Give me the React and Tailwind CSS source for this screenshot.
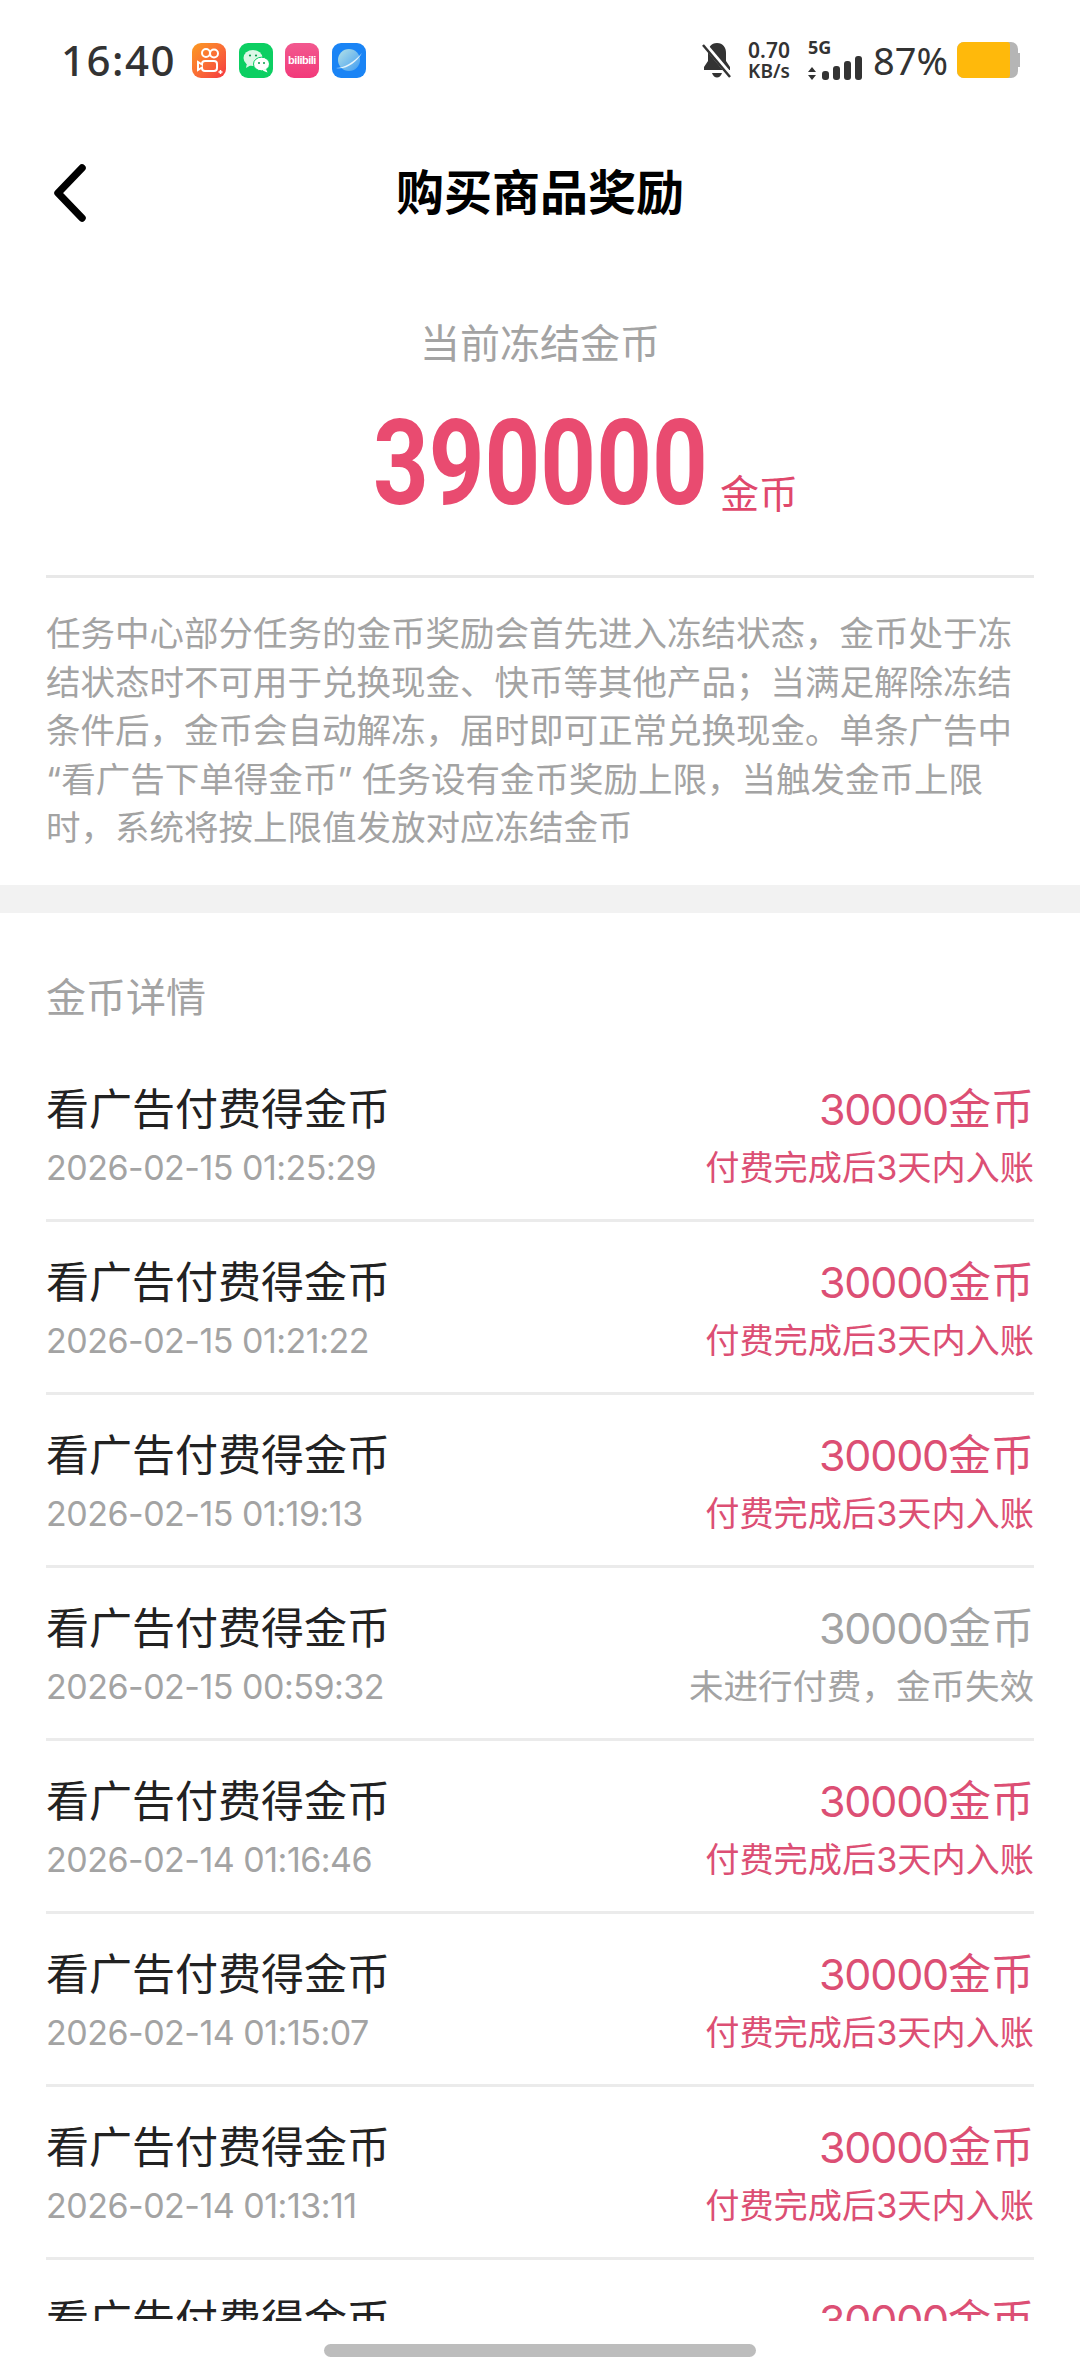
import React from 'react'

const rows = [
  { time: '2026-02-15 01:25:29' },
  { time: '2026-02-15 01:21:22' },
  { time: '2026-02-15 01:19:13' },
  { time: '2026-02-15 00:59:32', failed: true },
  { time: '2026-02-14 01:16:46' },
  { time: '2026-02-14 01:15:07' },
  { time: '2026-02-14 01:13:11' },
  { time: '2026-02-14 01:11:02' },
]

const KuaishouIcon = () => (
  <div className="w-[34px] h-[35px] rounded-[9px] bg-gradient-to-br from-[#fb9a1e] to-[#f5323f]">
    <svg viewBox="0 0 34 35" className="w-full h-full" fill="none" stroke="#fff" strokeWidth="2">
      <circle cx="14" cy="10" r="4" />
      <circle cx="22" cy="10.500" r="4" />
      <path d="M13 18h9a3 3 0 0 1 3 3v4a3 3 0 0 1-3 3h-9a3 3 0 0 1-3-3v-0.500L6 27v-8l4 2.500V21a3 3 0 0 1 3-3z" />
      <path d="M28.500 27v4M26.500 29h4" strokeWidth="1.500" />
    </svg>
  </div>
)

const WechatIcon = () => (
  <div className="w-[34px] h-[35px] rounded-[9px] bg-[#0ccf62]">
    <svg viewBox="0 0 34 35" className="w-full h-full">
      <ellipse cx="14" cy="15" rx="9.500" ry="8" fill="#dcf7e6" />
      <path d="M8 20l-1 5 5-3z" fill="#dcf7e6" />
      <ellipse cx="22.500" cy="21" rx="8" ry="6.800" fill="#fff" stroke="#0ccf62" strokeWidth="1" />
      <path d="M27 26l1.500 3.500-5-2z" fill="#fff" />
      <circle cx="11" cy="12.500" r="1.100" fill="#0a9c4b" />
      <circle cx="17" cy="12.500" r="1.100" fill="#0a9c4b" />
      <circle cx="20" cy="20" r="1" fill="#0a9c4b" />
      <circle cx="25" cy="20" r="1" fill="#0a9c4b" />
    </svg>
  </div>
)

const BiliIcon = () => (
  <div className="w-[34px] h-[35px] rounded-[9px] bg-gradient-to-b from-[#f2588f] to-[#f2397a] flex items-center justify-center overflow-hidden">
    <span className="text-[11px] font-bold text-white tracking-[-0.500px] font-['Liberation_Sans',sans-serif]">bilibili</span>
  </div>
)

const BrowserIcon = () => (
  <div className="w-[34px] h-[35px] rounded-[9px] bg-[#1a84f5]">
    <svg viewBox="0 0 34 35" className="w-full h-full" fill="none">
      <defs>
        <linearGradient id="planet" x1="0" y1="0" x2="1" y2="1">
          <stop offset="0" stopColor="#b5e2e6" />
          <stop offset="1" stopColor="#3f9cf2" />
        </linearGradient>
      </defs>
      <circle cx="17" cy="17" r="11" fill="url(#planet)" />
      <path d="M4 25c8 0 18-6 26-15-6 10-16 17-26 15z" fill="#e6f5fb" />
    </svg>
  </div>
)

const BellOffIcon = () => (
  <svg viewBox="0 0 30 36" className="w-[30px] h-[36px]">
    <path d="M15 1c-6 0-9 4.500-9 10v8l-4 6v3h26v-3l-4-6v-8c0-5.500-3-10-9-10z" fill="#333" />
    <path d="M10 31c1 3 3 4.500 5 4.500s4-1.500 5-4.500z" fill="#333" />
    <path d="M3 3l26 31" stroke="#fff" strokeWidth="5" />
    <path d="M1 3l27 32" stroke="#333" strokeWidth="2.500" />
  </svg>
)

const SignalIcon = () => (
  <div className="flex items-end gap-[4px]">
    <svg viewBox="0 0 8 13" className="w-[8px] h-[13px] mr-[2px]" fill="#333">
      <path d="M4 0l4 5H0zM4 13L0 8h8z" />
    </svg>
    <div className="w-[7px] h-[9px] rounded-[3px] bg-[#333]" />
    <div className="w-[7px] h-[14px] rounded-[3px] bg-[#333]" />
    <div className="w-[7px] h-[19px] rounded-[3px] bg-[#333]" />
    <div className="w-[7px] h-[24px] rounded-[3px] bg-[#333]" />
  </div>
)

const StatusBar = () => (
  <div className="h-[120px] flex items-center pl-[61px] pr-[60px] font-['Noto_Sans',sans-serif] text-[#333]">
    <span className="w-[131px] text-[42px] font-medium leading-none tracking-[1.500px]">16:40</span>
    <div className="flex gap-[12.500px]">
      <KuaishouIcon />
      <WechatIcon />
      <BiliIcon />
      <BrowserIcon />
    </div>
    <div className="ml-auto flex items-center">
      <BellOffIcon />
      <div className="ml-[13px] w-[48px] flex flex-col items-center font-semibold">
        <span className="text-[21px] leading-[21px]">0.70</span>
        <span className="text-[19px] leading-[20px]">KB/s</span>
      </div>
      <div className="ml-[15px] flex flex-col">
        <span className="text-[18px] leading-[15px] font-bold mb-[1px]">5G</span>
        <SignalIcon />
      </div>
      <span className="ml-[11px] w-[74px] text-[38px] leading-none">87%</span>
      <div className="ml-[10px] flex items-center">
        <div className="w-[61px] h-[36px] rounded-[7px] bg-[#b5b5b5] overflow-hidden">
          <div className="w-[53px] h-full rounded-r-[3px] bg-[#ffb90b]" />
        </div>
        <div className="w-[2px] h-[14px] bg-[#b5b5b5]" />
      </div>
    </div>
  </div>
)

const Header = () => (
  <div className="relative h-[148px] pb-[3px] flex items-center justify-center">
    <svg viewBox="0 0 32 58" className="absolute left-[54px] top-[44px] w-[32px] h-[58px]" fill="none" stroke="#000" strokeWidth="7.500" strokeLinecap="round" strokeLinejoin="round">
      <path d="M28 4L4 29l24 25" />
    </svg>
    <h1 className="text-[48px] font-bold leading-none text-black">购买商品奖励</h1>
  </div>
)

const Row = ({ time, failed }) => (
  <div className="h-[173px] mx-[46px] pt-[30px] border-b-[3px] border-[#ebebeb] flex justify-between">
    <div className="flex flex-col">
      <span className="text-[43px] leading-[60px] text-[#222]">看广告付费得金币</span>
      <span className="mt-[4px] text-[34px] leading-[50px] tracking-[-0.500px] text-[#a3a3a3]">{time}</span>
    </div>
    <div className="flex flex-col items-end">
      <span className={`text-[43px] leading-[60px] ${failed ? 'text-[#a3a3a3]' : 'text-[#dc4f74]'}`}>
        <span className="tracking-[-1.200px]">30000</span>金币
      </span>
      <span className={`mt-[4px] leading-[50px] ${failed ? 'text-[34.500px] text-[#a3a3a3]' : 'text-[34.200px] text-[#dc4f74]'}`}>
        {failed ? '未进行付费，金币失效' : '付费完成后3天内入账'}
      </span>
    </div>
  </div>
)

export default function App() {
  return (
    <div className="w-[1080px] h-[2376px] bg-white overflow-hidden flex flex-col font-['Inter','Noto_Sans_CJK_SC',sans-serif]">
      <StatusBar />
      <Header />

      {/* 当前冻结金币 */}
      <div className="mt-[46px] text-center text-[40px] leading-[60px] text-[#a3a3a3]">当前冻结金币</div>
      <div className="mt-[30px] h-[120px] pl-[373px] flex items-end">
        <div className="w-[331px]">
          <span className="inline-block origin-left scale-x-[0.824] text-[118px] leading-[120px] font-bold font-['Roboto'] text-[#e94b70]">390000</span>
        </div>
        <span className="ml-[16px] mb-[8px] text-[39px] leading-[44px] text-[#e0486c]">金币</span>
      </div>

      <div className="mt-[51px] mx-[46px] h-[3px] bg-[#e8e8e8]" />
      <p className="mx-[46px] pt-[32px] pb-[32px] text-[34.500px] leading-[48.500px] text-[#a3a3a3]">
        任务中心部分任务的金币奖励会首先进入冻结状态，金币处于冻结状态时不可用于兑换现金、快币等其他产品；当满足解除冻结条件后，金币会自动解冻，届时即可正常兑换现金。单条广告中<br />“看广告下单得金币” 任务设有金币奖励上限，当触发金币上限时，系统将按上限值发放对应冻结金币
      </p>
      <div className="h-[28px] bg-[#f2f2f2]" />

      {/* 金币详情 */}
      <div className="mt-[55px] mb-[21px] mx-[46px] text-[40px] leading-[60px] text-[#a3a3a3]">金币详情</div>
      <div className="h-[1272px] overflow-hidden">
        {rows.map((row) => (
          <Row key={row.time} {...row} />
        ))}
      </div>

      <div className="mt-[23px] mx-auto w-[432px] h-[13px] rounded-full bg-[#bdbdbd]" />
    </div>
  )
}
